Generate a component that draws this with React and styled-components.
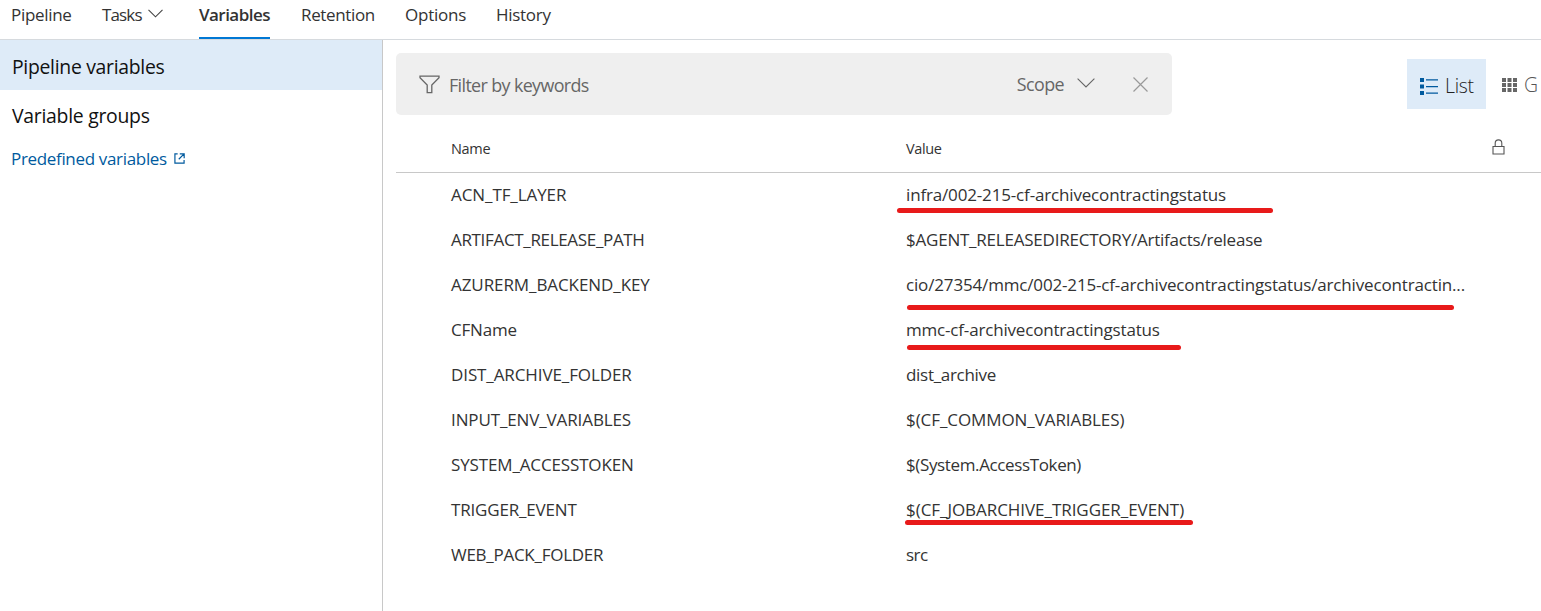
import React from "react";
import styled, { createGlobalStyle, css } from "styled-components";

const GlobalStyle = createGlobalStyle`
  * { box-sizing: border-box; }
  body {
    margin: 0;
    background: #fff;
    color: #333;
    font-family: "Open Sans", "Noto Sans", sans-serif;
    font-size: 17px;
    overflow: hidden;
  }
`;

const Page = styled.div`
  display: flex;
  flex-direction: column;
  height: 100vh;
  overflow: hidden;
`;

const Label = styled.span`
  letter-spacing: ${(p) => p.$track || 0}px;
  white-space: nowrap;
`;

const TabBar = styled.nav`
  display: flex;
  flex: none;
  height: 40px;
  border-bottom: 1px solid #d6dade;
  padding-left: 11px;
`;

const Tab = styled.a`
  display: flex;
  align-items: flex-start;
  flex: none;
  width: ${(p) => p.$width}px;
  margin-right: ${(p) => p.$gap}px;
  height: 39px;
  line-height: 29px;
  border-bottom: 2px solid transparent;
  ${(p) =>
    p.$active &&
    css`
      font-weight: 600;
      border-color: #0078d4;
    `}
`;

const TabChevron = styled.svg`
  margin: 9px 0 0 6px;
`;

const Body = styled.div`
  display: flex;
  flex: 1;
  min-height: 0;
`;

const Sidebar = styled.aside`
  flex: none;
  width: 383px;
  border-right: 1px solid #c8c8c8;
`;

const SideItem = styled.div`
  height: 50px;
  line-height: 50px;
  padding: ${(p) => (p.$selected ? 2 : 1)}px 0 0 12px;
  font-size: 19.4px;
  color: #111;
  background: ${(p) => (p.$selected ? "#deebf8" : "transparent")};
`;

const SideLink = styled.a`
  display: flex;
  align-items: center;
  gap: 7px;
  height: 36px;
  padding-left: 11px;
  color: #005a9e;
`;

const Main = styled.main`
  flex: 1;
  min-width: 0;
  padding: 13px 0 0 13px;
`;

const Toolbar = styled.div`
  display: flex;
  align-items: center;
  height: 62px;
`;

const FilterBar = styled.div`
  display: flex;
  align-items: center;
  flex: none;
  width: 776px;
  height: 62px;
  padding: 0 24px 0 23px;
  border-radius: 5px;
  background: #efefef;
  color: #666;
  font-size: 17.9px;
`;

const FilterInput = styled.div`
  flex: 1;
  padding: 2px 0 0 9px;
`;

const Scope = styled.div`
  display: flex;
  align-items: center;
  gap: 13px;
  margin-right: 38px;

  svg {
    margin-bottom: 2px;
  }
`;

const ViewSwitch = styled.div`
  display: flex;
  flex: none;
  margin-left: 235px;
`;

const ViewButton = styled.div`
  display: flex;
  align-items: center;
  gap: 7px;
  height: 50px;
  width: ${(p) => (p.$selected ? 79 : 55)}px;
  padding: ${(p) => (p.$selected ? 4 : 2)}px 0 0 ${(p) => (p.$selected ? 13 : 16)}px;
  font-size: 19.4px;
  font-weight: 300;
  line-height: 24px;
  color: ${(p) => (p.$selected ? "#222" : "#555")};
  background: ${(p) => (p.$selected ? "#deebf8" : "transparent")};
`;

const TableRow = styled.div`
  display: grid;
  grid-template-columns: 455px 586px 1fr;
  height: 45px;
  padding: 0 0 2px 55px;
  line-height: 43px;
`;

const HeaderRow = styled(TableRow)`
  height: 58px;
  padding-bottom: 0;
  line-height: 68px;
  font-size: 14.5px;
  border-bottom: 1px solid #c8c8c8;
`;

const LockCell = styled.div`
  padding-top: 24px;
  line-height: 0;
`;

const Cell = styled.div`
  position: relative;
  white-space: nowrap;
`;

const Marker = styled.i`
  position: absolute;
  left: ${(p) => p.$left}px;
  top: ${(p) => p.$top}px;
  width: ${(p) => p.$width}px;
  height: 5px;
  border-radius: 3px;
  background: #e81a1a;
`;

const tabs = [
  { text: "Pipeline", track: -0.3, width: 61, gap: 30 },
  { text: "Tasks", track: -0.85, width: 62, gap: 35, menu: true },
  { text: "Variables", track: -0.54, width: 71, gap: 31, active: true },
  { text: "Retention", track: -0.35, width: 75, gap: 29 },
  { text: "Options", track: -0.22, width: 62, gap: 29 },
  { text: "History", track: -0.28, width: 56, gap: 0 },
];

const rows = [
  { name: "ACN_TF_LAYER", nt: -0.08, value: "infra/002-215-cf-archivecontractingstatus", vt: -0.16, mark: [-9, 35, 376] },
  { name: "ARTIFACT_RELEASE_PATH", nt: -0.33, value: "$AGENT_RELEASEDIRECTORY/Artifacts/release", vt: -0.22 },
  { name: "AZURERM_BACKEND_KEY", nt: -0.08, value: "cio/27354/mmc/002-215-cf-archivecontractingstatus/archivecontractin...", vt: -0.16, mark: [1, 42, 547] },
  { name: "CFName", nt: -0.18, value: "mmc-cf-archivecontractingstatus", vt: -0.18, mark: [1, 37, 274] },
  { name: "DIST_ARCHIVE_FOLDER", nt: -0.1, value: "dist_archive", vt: -0.3 },
  { name: "INPUT_ENV_VARIABLES", nt: -0.12, value: "$(CF_COMMON_VARIABLES)", vt: -0.08 },
  { name: "SYSTEM_ACCESSTOKEN", nt: -0.14, value: "$(System.AccessToken)", vt: -0.37 },
  { name: "TRIGGER_EVENT", nt: -0.17, value: "$(CF_JOBARCHIVE_TRIGGER_EVENT)", vt: -0.05, mark: [-1, 32, 288] },
  { name: "WEB_PACK_FOLDER", nt: -0.27, value: "src", vt: -0.5 },
];

const FunnelIcon = () => (
  <svg width="21" height="19" viewBox="0 0 21 19" fill="none" stroke="#666" strokeWidth="1.3">
    <path d="M1 1.2H20V2.8L12.8 10V17.6H8.2V10L1 2.8Z" />
  </svg>
);

const Chevron = () => (
  <svg width="18" height="10" viewBox="0 0 18 10" fill="none" stroke="#666" strokeWidth="1.1">
    <path d="M.6.6 9 9 17.4.6" />
  </svg>
);

const CloseIcon = () => (
  <svg width="15" height="15" viewBox="0 0 15 15" stroke="#999" strokeWidth="1.2">
    <path d="M.5.5 14.5 14.5M14.5.5.5 14.5" />
  </svg>
);

const ExternalIcon = () => (
  <svg width="11" height="11" viewBox="0 0 12 12" fill="none" stroke="#005a9e" strokeWidth="1.3">
    <path d="M4 1H1V11H11V7.5M6.3.9H11.1V5.7M11 1 5.2 6.8" />
  </svg>
);

const ListIcon = () => (
  <svg width="18" height="17" viewBox="0 0 18 17" fill="#005a9e">
    <path d="M0 0h4v4H0zM0 6.5h4v4H0zM0 13h4v4H0zM6 1.3h12v1.2H6zM6 8h12v1.2H6zM6 14.6h12v1.2H6z" />
  </svg>
);

const GridIcon = () => (
  <svg width="15" height="14" viewBox="0 0 15 14" fill="#666">
    <path d="M0 0h4v4H0zM5.5 0h4v4h-4zM11 0h4v4h-4zM0 5h4v4H0zM5.5 5h4v4h-4zM11 5h4v4h-4zM0 10h4v4H0zM5.5 10h4v4h-4zM11 10h4v4h-4z" />
  </svg>
);

const LockIcon = () => (
  <svg width="13" height="16" viewBox="0 0 13 16" fill="none" stroke="#555" strokeWidth="1.1">
    <path d="M1 7.5H12V15H1ZM3.2 7.5V4.2a3.3 3.3 0 0 1 6.6 0V7.5" />
  </svg>
);

export default function App() {
  return (
    <Page>
      <GlobalStyle />
      <TabBar>
        {tabs.map((t) => (
          <Tab key={t.text} $width={t.width} $gap={t.gap} $active={t.active}>
            <Label $track={t.track}>{t.text}</Label>
            {t.menu && (
              <TabChevron width="15" height="9" viewBox="0 0 15 9" fill="none" stroke="#444" strokeWidth="1.1">
                <path d="M.5.8 7.5 7.8 14.5.8" />
              </TabChevron>
            )}
          </Tab>
        ))}
      </TabBar>
      <Body>
        <Sidebar>
          <SideItem $selected>
            <Label $track={-0.3}>Pipeline variables</Label>
          </SideItem>
          <SideItem>
            <Label $track={-0.27}>Variable groups</Label>
          </SideItem>
          <SideLink>
            <Label $track={-0.33}>Predefined variables</Label>
            <ExternalIcon />
          </SideLink>
        </Sidebar>
        <Main>
          <Toolbar>
            <FilterBar>
              <FunnelIcon />
              <FilterInput>
                <Label $track={-0.63}>Filter by keywords</Label>
              </FilterInput>
              <Scope>
                <Label $track={-0.6}>Scope</Label>
                <Chevron />
              </Scope>
              <CloseIcon />
            </FilterBar>
            <ViewSwitch>
              <ViewButton $selected>
                <ListIcon />
                <Label $track={-0.3}>List</Label>
              </ViewButton>
              <ViewButton>
                <GridIcon />
                <Label>G</Label>
              </ViewButton>
            </ViewSwitch>
          </Toolbar>
          <HeaderRow>
            <Cell>
              <Label $track={-0.3}>Name</Label>
            </Cell>
            <Cell>
              <Label $track={-0.35}>Value</Label>
            </Cell>
            <LockCell>
              <LockIcon />
            </LockCell>
          </HeaderRow>
          {rows.map((r) => (
            <TableRow key={r.name}>
              <Cell>
                <Label $track={r.nt}>{r.name}</Label>
              </Cell>
              <Cell>
                <Label $track={r.vt}>{r.value}</Label>
                {r.mark && <Marker $left={r.mark[0]} $top={r.mark[1]} $width={r.mark[2]} />}
              </Cell>
            </TableRow>
          ))}
        </Main>
      </Body>
    </Page>
  );
}
